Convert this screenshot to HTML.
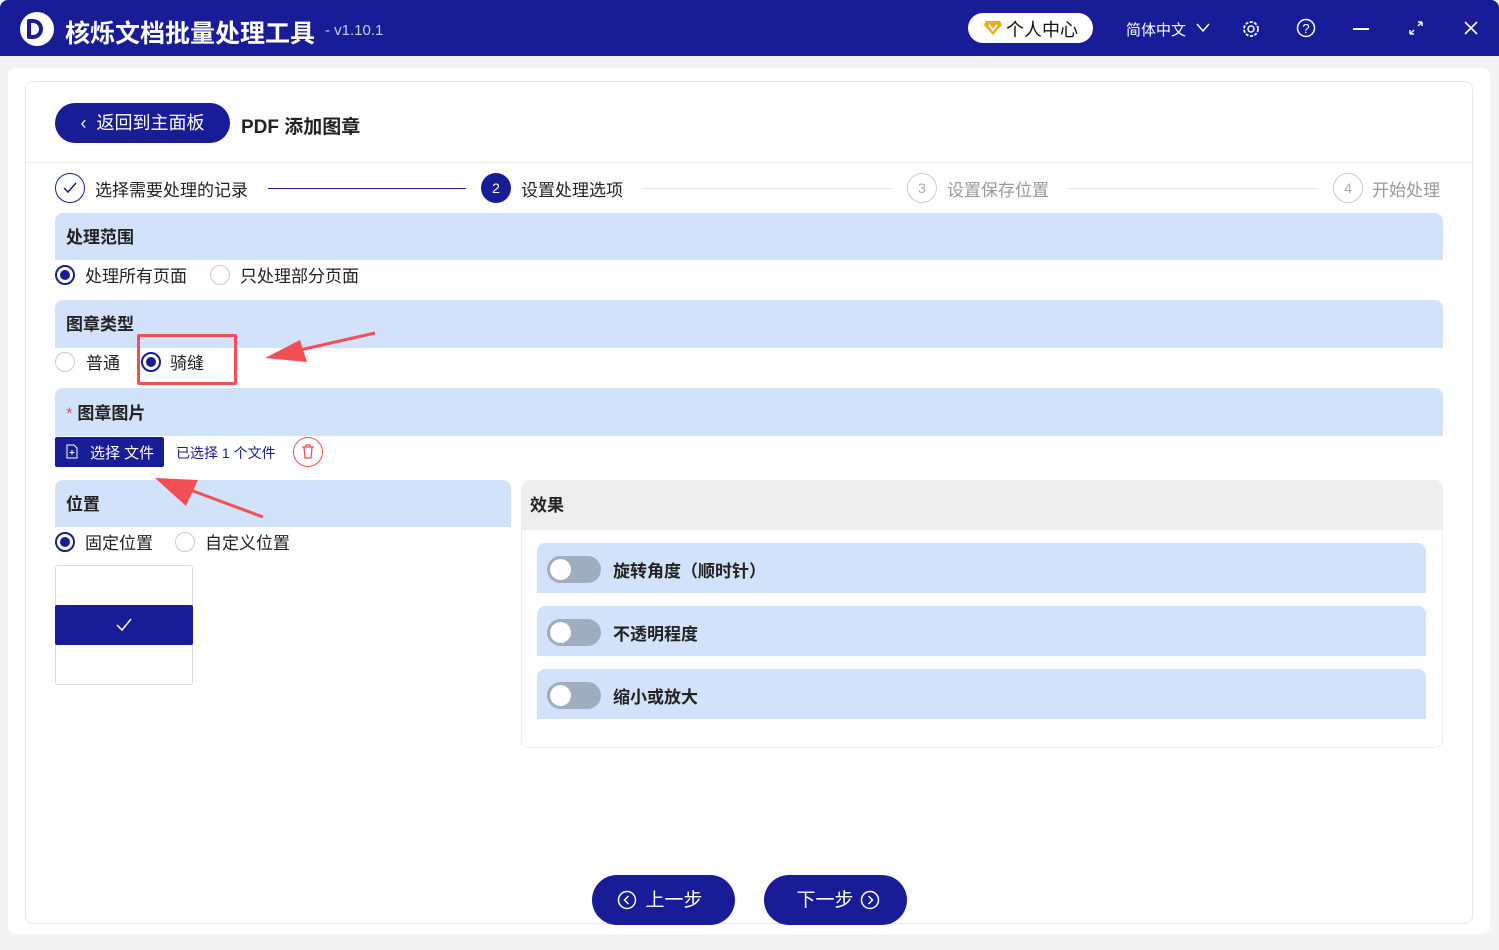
<!DOCTYPE html>
<html><head><meta charset="utf-8"><style>
*{margin:0;padding:0;box-sizing:border-box}
body{width:1499px;height:950px;overflow:hidden;background:#f3f3f3;font-family:"Liberation Sans","Noto Sans CJK SC",sans-serif;color:#222;position:relative}
.a{position:absolute}
.hdr{left:0;top:0;width:1499px;height:56px;background:#181d97;border-radius:8px 8px 0 0}
.card{left:8px;top:68px;width:1482px;height:866px;background:#fff;border-radius:8px}
.panel{left:25px;top:81px;width:1448px;height:843px;border:1px solid #e8e8e8;border-radius:8px;background:#fff}
.bar{background:#d3e2fb;border-radius:8px 8px 0 0;font-weight:bold;font-size:17px;padding-left:11px}
.radio{width:20px;height:20px;border-radius:50%;border:1px solid #ccc;background:#fff}
.radio.on{border:2px solid #181d97}
.radio.on:after{content:"";position:absolute;left:3px;top:3px;width:10px;height:10px;border-radius:50%;background:#181d97}
.t{font-size:17px;white-space:nowrap}
.tg{width:54px;height:27px;border-radius:14px;background:#a0adc1}
.tg:after{content:"";position:absolute;left:3px;top:3px;width:21px;height:21px;border-radius:50%;background:#fff}
.eff{left:537px;width:889px;height:50px;background:#d3e2fb;border-radius:8px 8px 0 0}
.eff span{position:absolute;left:76px;top:14px;font-size:17px;font-weight:bold}
.btn{background:#181d97;color:#fff;border-radius:26px;font-size:19px;text-align:center}
</style></head><body>
<div class="a hdr"></div>
<div class="a" style="left:20px;top:12px;width:34px;height:34px;border-radius:50%;background:#fff"></div>
<div class="a" style="left:27px;top:19px;width:16px;height:20px;border:4px solid #181d97;border-radius:2px 10px 10px 2px"></div>
<div class="a" style="left:65px;top:14px;color:#fff;font-size:25px;font-weight:bold">核烁文档批量处理工具</div>
<div class="a" style="left:325px;top:22px;color:#c7c9e6;font-size:15px">- v1.10.1</div>
<div class="a" style="left:968px;top:13px;width:125px;height:30px;border-radius:15px;background:#fff"></div>
<svg class="a" style="left:984px;top:20px" width="18" height="16" viewBox="0 0 18 16"><path d="M2 1h14l2 4-9 10L0 5z" fill="#f5a623"/><path d="M5 5l4 5 4-5" stroke="#fff" stroke-width="2" fill="none"/></svg>
<div class="a" style="left:1006px;top:16px;font-size:18px;color:#111">个人中心</div>
<div class="a" style="left:1126px;top:19px;font-size:15px;color:#fff">简体中文</div>
<svg class="a" style="left:1196px;top:23px" width="14" height="10"><path d="M1 1l6 7 6-7" stroke="#fff" fill="none" stroke-width="1.5"/></svg>
<svg class="a" style="left:1241px;top:19px" width="20" height="20" viewBox="0 0 20 20"><circle cx="10" cy="10" r="3" stroke="#fff" fill="none" stroke-width="1.5"/><circle cx="10" cy="10" r="7" stroke="#fff" fill="none" stroke-width="1.8" stroke-dasharray="3 1.5"/></svg>
<svg class="a" style="left:1296px;top:18px" width="20" height="20"><circle cx="10" cy="10" r="8.5" stroke="#fff" fill="none" stroke-width="1.5"/><text x="10" y="15" fill="#fff" font-size="13" text-anchor="middle" font-family="Liberation Sans">?</text></svg>
<div class="a" style="left:1353px;top:28px;width:16px;height:2px;background:#fff"></div>
<svg class="a" style="left:1408px;top:20px" width="16" height="16"><path d="M2 14l4-4M10 6l4-4M2 14v-4M2 14h4M14 2v4M14 2h-4" stroke="#fff" stroke-width="1.5" fill="none"/></svg>
<svg class="a" style="left:1463px;top:20px" width="16" height="16"><path d="M2 2l12 12M14 2L2 14" stroke="#fff" stroke-width="1.6"/></svg>

<div class="a card"></div>
<div class="a panel"></div>
<div class="a btn" style="left:55px;top:103px;width:175px;height:40px;line-height:40px;font-size:18px">‹&nbsp; 返回到主面板</div>
<div class="a" style="left:241px;top:112px;font-size:19px;font-weight:bold">PDF 添加图章</div>
<div class="a" style="left:26px;top:162px;width:1446px;height:1px;background:#ececec"></div>

<div class="a" style="left:55px;top:173px;width:30px;height:30px;border-radius:50%;border:1px solid #181d97"></div>
<svg class="a" style="left:62px;top:181px" width="16" height="14"><path d="M2 7l4 4 8-9" stroke="#181d97" stroke-width="1.5" fill="none"/></svg>
<div class="a t" style="left:95px;top:176px">选择需要处理的记录</div>
<div class="a" style="left:268px;top:188px;width:198px;height:1px;background:#181d97"></div>
<div class="a" style="left:481px;top:173px;width:30px;height:30px;border-radius:50%;background:#181d97;color:#fff;text-align:center;line-height:30px;font-size:14px">2</div>
<div class="a t" style="left:521px;top:176px">设置处理选项</div>
<div class="a" style="left:642px;top:188px;width:250px;height:1px;background:#e5e5e5"></div>
<div class="a" style="left:907px;top:173px;width:30px;height:30px;border-radius:50%;border:1px solid #ccc;color:#aaa;text-align:center;line-height:28px;font-size:14px">3</div>
<div class="a t" style="left:947px;top:176px;color:#999">设置保存位置</div>
<div class="a" style="left:1068px;top:188px;width:250px;height:1px;background:#e5e5e5"></div>
<div class="a" style="left:1333px;top:173px;width:30px;height:30px;border-radius:50%;border:1px solid #ccc;color:#aaa;text-align:center;line-height:28px;font-size:14px">4</div>
<div class="a t" style="left:1372px;top:176px;color:#999">开始处理</div>

<div class="a bar" style="left:55px;top:213px;width:1388px;height:47px;line-height:49px">处理范围</div>
<div class="a radio on" style="left:55px;top:265px"></div>
<div class="a t" style="left:85px;top:262px">处理所有页面</div>
<div class="a radio" style="left:210px;top:265px"></div>
<div class="a t" style="left:240px;top:262px">只处理部分页面</div>

<div class="a bar" style="left:55px;top:300px;width:1388px;height:48px;line-height:50px">图章类型</div>
<div class="a radio" style="left:55px;top:352px"></div>
<div class="a t" style="left:86px;top:349px">普通</div>
<div class="a radio on" style="left:141px;top:352px"></div>
<div class="a t" style="left:170px;top:349px">骑缝</div>
<div class="a" style="left:137px;top:334px;width:100px;height:51px;border:3px solid #f24f55;border-radius:2px"></div>
<svg class="a" style="left:260px;top:330px" width="120" height="40"><path d="M115 3L40 20" stroke="#f24f55" stroke-width="3"/><path d="M5 28L40 10L47 32z" fill="#f24f55"/></svg>

<div class="a bar" style="left:55px;top:388px;width:1388px;height:48px;line-height:51px"><span style="color:#f24f55;font-weight:normal">*</span> 图章图片</div>
<div class="a" style="left:55px;top:437px;width:109px;height:30px;background:#181d97;border-radius:2px"></div>
<svg class="a" style="left:66px;top:444px" width="12" height="15"><path d="M1 1h7l3 3v10H1z" stroke="#fff" fill="none"/><path d="M6 6v5M3.5 8.5h5" stroke="#fff"/></svg>
<div class="a" style="left:90px;top:442px;color:#fff;font-size:15px">选择 文件</div>
<div class="a" style="left:176px;top:443px;color:#181d97;font-size:14px">已选择 1 个文件</div>
<div class="a" style="left:293px;top:437px;width:30px;height:30px;border-radius:50%;border:1px solid #f24f55"></div>
<svg class="a" style="left:300px;top:444px" width="16" height="16"><path d="M2 3h12M6 3V1h4v2M4 3l1 11h6l1-11" stroke="#f24f55" fill="none" stroke-width="1.3"/></svg>

<div class="a bar" style="left:55px;top:480px;width:456px;height:47px;line-height:50px">位置</div>
<svg class="a" style="left:150px;top:470px" width="120" height="52"><path d="M113 47L35 18" stroke="#f24f55" stroke-width="3"/><path d="M5 8L48 10L36 36z" fill="#f24f55"/></svg>
<div class="a radio on" style="left:55px;top:532px"></div>
<div class="a t" style="left:85px;top:529px">固定位置</div>
<div class="a radio" style="left:175px;top:532px"></div>
<div class="a t" style="left:205px;top:529px">自定义位置</div>
<div class="a" style="left:55px;top:565px;width:138px;height:120px;border:1px solid #ddd;border-radius:3px"></div>
<div class="a" style="left:55px;top:605px;width:138px;height:40px;background:#181d97;border-radius:2px"></div>
<svg class="a" style="left:115px;top:617px" width="18" height="16"><path d="M2 8l5 5 9-11" stroke="#fff" stroke-width="1.5" fill="none"/></svg>

<div class="a" style="left:521px;top:480px;width:922px;height:268px;border:1px solid #eee;border-radius:8px;background:#fff"></div>
<div class="a" style="left:522px;top:481px;width:920px;height:49px;background:#eeeeee;border-radius:8px 8px 0 0;font-weight:bold;font-size:17px;line-height:50px;padding-left:8px">效果</div>
<div class="a eff" style="top:543px"><div class="a tg" style="left:10px;top:13px"></div><span>旋转角度（顺时针）</span></div>
<div class="a eff" style="top:606px"><div class="a tg" style="left:10px;top:13px"></div><span>不透明程度</span></div>
<div class="a eff" style="top:669px"><div class="a tg" style="left:10px;top:13px"></div><span>缩小或放大</span></div>

<div class="a btn" style="left:592px;top:875px;width:143px;height:50px;line-height:52px">&nbsp;&nbsp;&nbsp;&nbsp;上一步</div>
<svg class="a" style="left:617px;top:890px" width="20" height="20"><circle cx="10" cy="10" r="8.5" stroke="#fff" fill="none" stroke-width="1.5"/><path d="M11.5 6l-4 4 4 4" stroke="#fff" fill="none" stroke-width="1.5"/></svg>
<div class="a btn" style="left:764px;top:875px;width:143px;height:50px;line-height:52px">下一步&nbsp;&nbsp;&nbsp;&nbsp;</div>
<svg class="a" style="left:860px;top:890px" width="20" height="20"><circle cx="10" cy="10" r="8.5" stroke="#fff" fill="none" stroke-width="1.5"/><path d="M8.5 6l4 4-4 4" stroke="#fff" fill="none" stroke-width="1.5"/></svg>
</body></html>
